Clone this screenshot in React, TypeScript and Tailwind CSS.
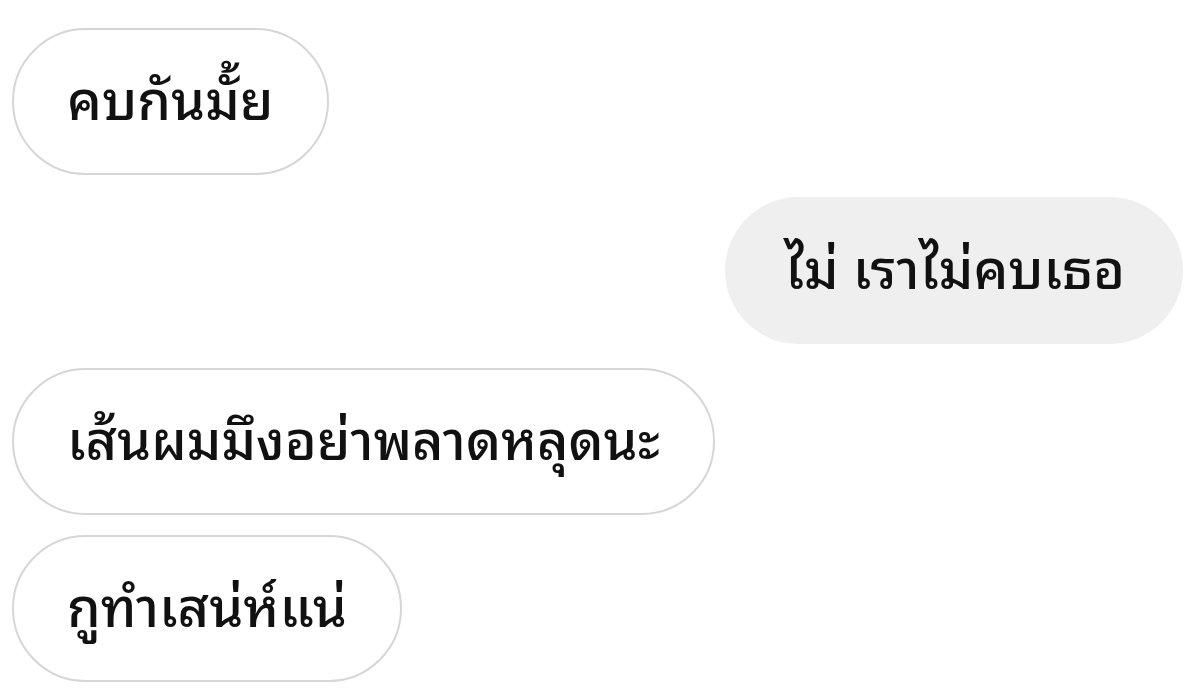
const messages = [
  { text: "คบกันมั้ย", mine: false },
  { text: "ไม่ เราไม่คบเธอ", mine: true },
  { text: "เส้นผมมึงอย่าพลาดหลุดนะ", mine: false },
  { text: "กูทำเสน่ห์แน่", mine: false },
];

export default function App() {
  return (
    <div className="w-[1200px] h-[697px] bg-white overflow-hidden pt-[28px] pl-[12px] pr-[17px] flex flex-col font-['Noto_Sans_Thai_Looped','Noto_Sans_Thai',sans-serif]">
      {messages.map((m, i) => (
        <div
          key={i}
          className={`flex ${m.mine ? "justify-end" : "justify-start"} ${
            i === 0 ? "" : i === 1 ? "mt-[22px]" : i === 2 ? "mt-[24px]" : "mt-[20px]"
          }`}
        >
          <div
            className={`h-[147px] rounded-full flex items-center pb-3 border-2 text-[54px] font-[470] leading-none text-[#111] whitespace-nowrap ${
              m.mine
                ? "bg-[#efefef] border-transparent pl-[58px] pr-[56px]"
                : "bg-white border-[#d6d6d6] px-[53px]"
            }`}
          >
            {m.text}
          </div>
        </div>
      ))}
    </div>
  );
}
